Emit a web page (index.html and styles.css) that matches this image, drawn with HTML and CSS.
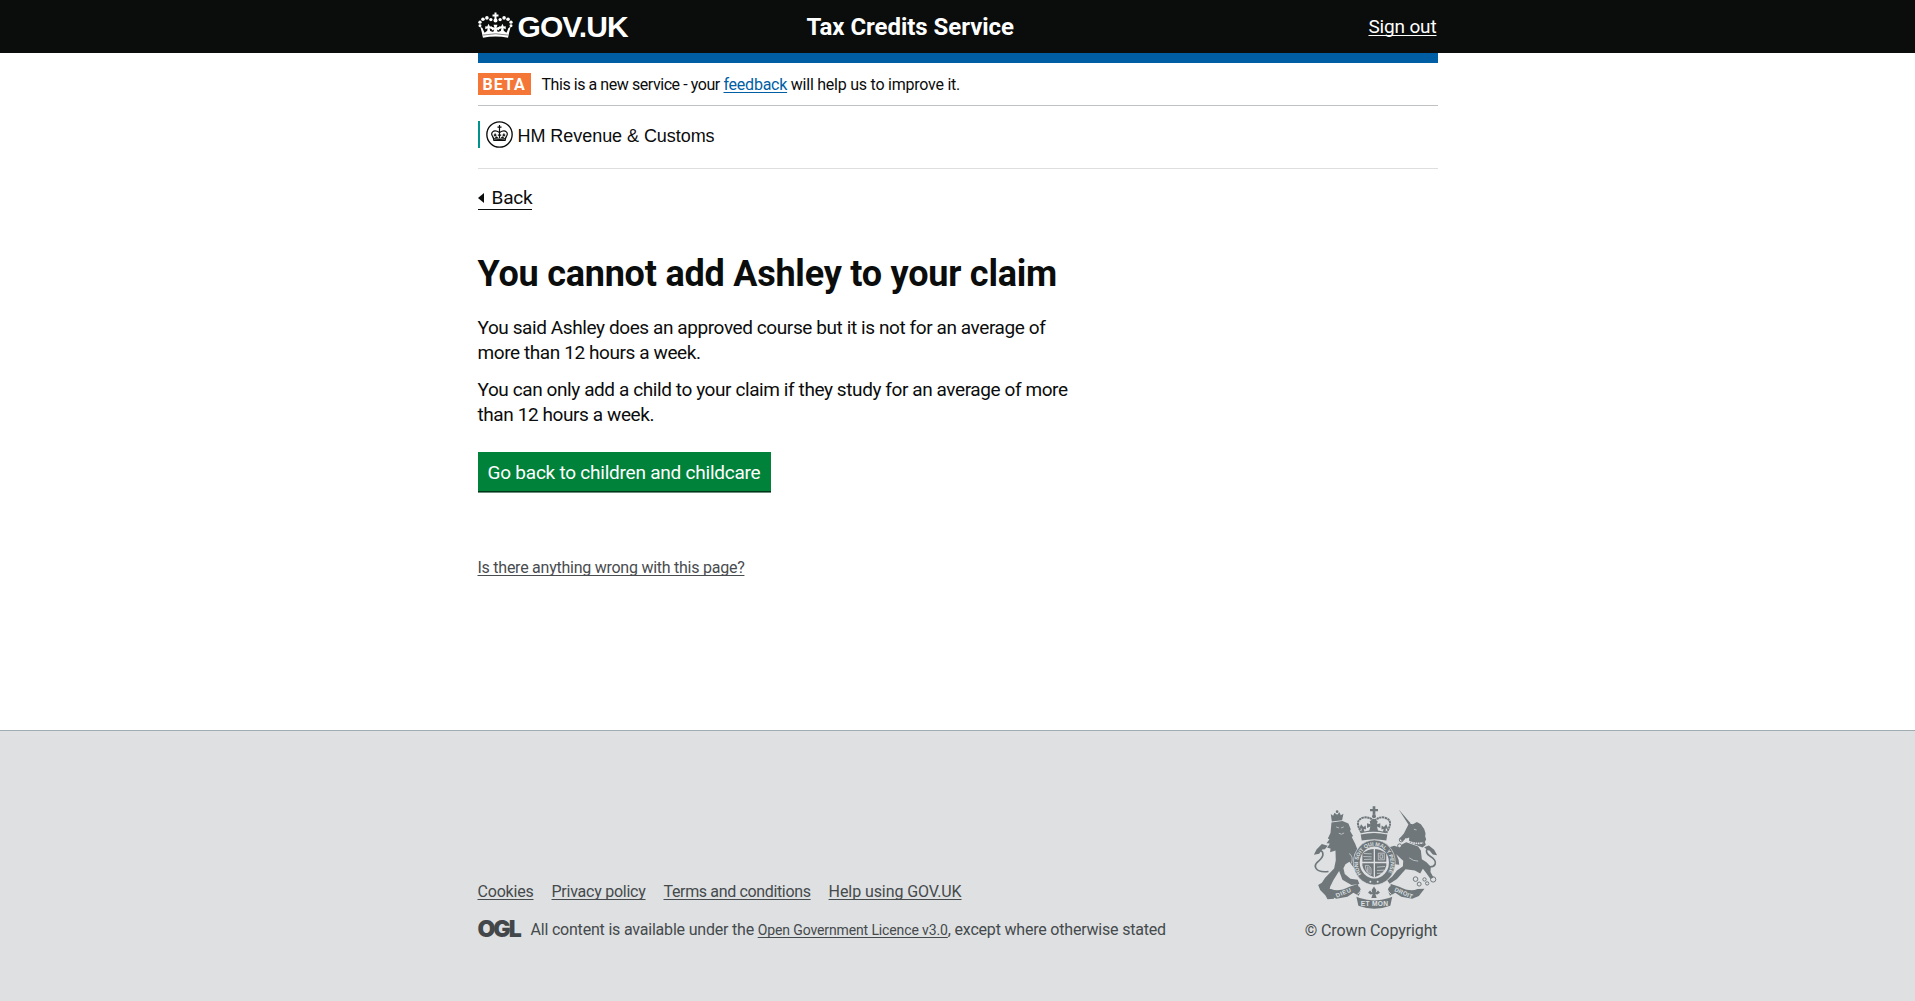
FILE: index.html
```html
<!DOCTYPE html>
<html lang="en">
<head>
<meta charset="utf-8">
<title>You cannot add Ashley to your claim</title>
<link rel="stylesheet" href="styles.css">
</head>
<body>
<header class="header">
  <div class="wrap header-row">
    <a class="logo" href="#">
      <svg class="logo-crown" viewBox="23 38 106 80" fill="#fff" aria-hidden="true">
        <path d="M73 39h6v6h6v6h-6v10h-6V51h-6v-6h6z"/>
        <circle cx="76" cy="63" r="6"/>
        <circle cx="62" cy="60" r="5"/><circle cx="50" cy="55" r="5.5"/><circle cx="38" cy="59" r="5.5"/><circle cx="29" cy="68" r="5"/><circle cx="29" cy="79" r="4.5"/>
        <circle cx="90" cy="60" r="5"/><circle cx="102" cy="55" r="5.5"/><circle cx="114" cy="59" r="5.5"/><circle cx="123" cy="68" r="5"/><circle cx="123" cy="79" r="4.5"/>
        <path d="M30 82q8 2 10 12l3 6 8-6 1-8-7 3v-9l6 1 4-8 4 8 6-1v9l-7-3 2 9 9 3 3-8-7 3v-11l8 3-3-9h12l-3 9 8-3v11l-7-3 3 8 9-3 2-9-7 3v-9l6 1 4-8 4 8 6-1v9l-7-3 1 8 8 6 3-6q2-10 10-12-5 17-8 33-38-7-76 0-3-16-8-33z"/>
        <path d="M38 107q38-8 76 0" fill="none" stroke="#0b0c0c" stroke-width="1.5"/>
      </svg>
      <span>GOV.UK</span>
    </a>
    <a class="service" href="#">Tax Credits Service</a>
    <a class="signout" href="#">Sign out</a>
  </div>
</header>
<main class="wrap">
  <div class="bar"></div>
  <div class="phase"><strong class="beta">BETA</strong><p><span class="intro">This is a new service - your</span> <a href="#">feedback</a> will help us to improve it.</p></div>
  <div class="org">
    <div class="org-mark">
      <svg class="org-crest" viewBox="0 0 80 80" aria-hidden="true">
        <g fill="none" stroke="#0b0c0c">
          <circle cx="40" cy="40" r="37.5" stroke-width="4"/>
          <path d="M22 49C10 35 22 23 40 34c18-11 30 1 18 15" stroke-width="3.5"/>
          <path d="M40 12v24M34 18h12M40 36v17M27 37v9M53 37v9M23 42h8M49 42h8M35 42h10" stroke-width="3.5"/>
        </g>
        <path d="M18 43l7 8 6-6 9 8 9-8 6 6 7-8-4 16H22z" fill="#0b0c0c"/>
        <path d="M24 54q16-4 32 0" stroke="#fff" stroke-width="1.5" fill="none"/>
      </svg>
      <span>HM Revenue &amp; Customs</span>
    </div>
  </div>
  <a class="back" href="#"><span class="arrow"></span>Back</a>
  <h1>You cannot add Ashley to your claim</h1>
  <p class="text first">You said Ashley does an approved course but it is not for an average of more than 12 hours a week.</p>
  <p class="text">You can only add a child to your claim if they study for an average of more than 12 hours a week.</p>
  <button class="button" type="button">Go back to children and childcare</button>
  <a class="report" href="#">Is there anything wrong with this page?</a>
</main>
<footer class="footer">
  <div class="wrap footer-row">
    <div class="meta">
      <nav class="links">
        <a class="cookies" href="#">Cookies</a>
        <a class="privacy" href="#">Privacy policy</a>
        <a class="terms" href="#">Terms and conditions</a>
        <a class="help" href="#">Help using GOV.UK</a>
      </nav>
      <div class="licence">
        <span class="ogl">OGL</span>
        <p>All content is available under the <a href="#">Open Government Licence v3.0</a>, except where otherwise stated</p>
      </div>
    </div>
    <div class="copyright">
      <svg class="arms" viewBox="15 10 375 310" aria-hidden="true">
        <defs><path id="motto" d="M160 215A49 53 0 1 1 238 215"/></defs>
        <g fill="#6f777b">
          <!-- centre crown -->
          <path d="M194 11h8v8h8v7h-8v10h-8V26h-8v-7h8z"/><circle cx="198" cy="41" r="6"/>
          <path d="M158 96q40-10 80 0l-3 18q-37-7-74 0z"/>
          <path d="M160 92l1-14-8 1 6-14 7 8 7-4 1 12-7-2 2 8 15-3 3-12-10 4v-14l10 3-2-9 12-8 12 8-2 9 10-3v14l-10-4 3 12 15 3 2-8-7 2 1-12 7 4 7-8 6 14-8-1 1 14q-38-9-76 0z"/>
          <!-- lion -->
          <path d="M68 34l7 5 4-9 8 6 7-7 4 9 8-5-4 20-31 4z"/><circle cx="87" cy="27" r="4"/>
          <path d="M70 60l33-5 18 8 7 17-2 5 9 15-4 3 10 20 8 20-10 12 7 26 9 8-5 12-14-7-12-16-12 7-6 12 4 18 17 14 22 3 5 13-24 3-27-16-10-26-17 27-10 20-4 21 14 8 2 7-20 2-6-12-16-16-6-15 11-7 10-15 27-28 5-25-1-29-16 5 1-11-10-2 8-13-10-1 9-12-5-2 8-17z"/>
          <!-- unicorn -->
          <path d="M272 20l36 42-5 6zM303 63l12 2 12-7 12 7 10 14 4 13-1 10 3 8-4 8 3 9-10 8-41-16 1-14-8 3-14 8-7-8 13-15z"/>
          <path d="M295 119l36 13 8 12 3 26 14 9 13 14-1 16 9 16-9 5-14-20-9-11-8 14-16-9-28-4-10 12-16 18-22 14-7-10 15-12 14-18 18-13 1-16-12-11-9-9 7 17 2 15-12-2-9-28-12-13 3-10 15-4 17 6 7-11z"/>
        </g>
        <g fill="none" stroke="#6f777b">
          <path d="M161 91q-25-38 5-46 18-4 32 11 14-15 32-11 30 8 5 46" stroke-width="6" stroke-dasharray="7 1.5"/>
          <path d="M61 207c-40 5-49-17-29-32 24-21 6-43-7-23" stroke-width="5"/>
          <path d="M349 190c39 11 43-15 18-29-24-14-4-38 11-10" stroke-width="5"/>
          <g stroke-width="3"><circle cx="280" cy="112" r="6"/><circle cx="275" cy="130" r="6"/><circle cx="276" cy="153" r="6"/><circle cx="323" cy="230" r="7"/><circle cx="334" cy="245" r="6"/><circle cx="350" cy="231" r="5"/><circle cx="358" cy="243" r="5"/><circle cx="376" cy="231" r="8"/></g>
        </g>
        <g fill="#6f777b">
          <path d="M17 157l8-16 16-17 18 6-9 10-8 1-9 13zM388 158l-9-16-16-13-14 5 10 9 6 1 10 12z"/>
          <path d="M48 259l21 1q22 10 55-7l25-8 10 17-7 18-16-9-18 12-33 6-20-8z"/>
          <path d="M350 259l-21 1q-22 10-55-7l-25-8-10 17 7 18 16-9 18 12 33 6 20-8z"/>
          <path d="M145 283l10 4q44 15 88 0l10-4-6 27q-48 18-96 0z"/>
          <path d="M198 252l7 11-2 8 7-7 6 7-8 5-6-1 4 12h-16l4-12-6 1-8-5 6-7 7 7-2-8z"/>
        </g>
        <path d="M150 250q13 1 10 10-3 9-12 16M248 250q-13 1-10 10 3 9 12 16" fill="none" stroke="#dee0e2" stroke-width="3"/>
        <path d="M292 108q18 19 54 13" fill="none" stroke="#dee0e2" stroke-width="5" stroke-dasharray="5 2"/>
        <path d="M84 73l9 3M99 76l8-3M92 92l8 3 8-4M123 153q14 8 7 30M304 166q12 10 27 10M318 80l8 2" fill="none" stroke="#dee0e2" stroke-width="2"/>
        <!-- garter and shield -->
        <ellipse cx="199" cy="180" rx="63" ry="68" fill="#6f777b" stroke="#dee0e2" stroke-width="2"/>
        <ellipse cx="199" cy="180" rx="44" ry="48" fill="#dee0e2"/>
        <path d="M163 153q36-27 72 0v36q-4 24-36 36-32-12-36-36z" fill="#6f777b"/>
        <g fill="none" stroke="#dee0e2" stroke-width="2">
          <path d="M199 134v92M160 180h79" stroke-width="4"/>
          <path d="M167 153l24 1M166 162l25 1M168 171l23-1M207 194l24-2M207 204l22-1M207 213l15-1M211 152h18v20h-18zM216 157h8v10h-8zM172 189q14-2 17 10v17M172 189q0 22 17 27M178 192v17M183 193v20"/>
        </g>
        <g fill="#dee0e2"><circle cx="187" cy="238" r="3"/><circle cx="209" cy="238" r="3"/></g>
        <g class="arms-text">
          <text font-size="16"><textPath href="#motto" textLength="222">HONI SOIT QUI MAL Y PENSE</textPath></text>
          <text x="158" y="310" font-size="20" textLength="82">ET MON</text>
          <text transform="translate(86 286) rotate(-23)" font-size="18" textLength="48">DIEU</text>
          <text transform="translate(258 266) rotate(23)" font-size="18" textLength="58">DROIT</text>
        </g>
      </svg>
      <a href="#">© Crown Copyright</a>
    </div>
  </div>
</footer>
</body>
</html>
```
FILE: styles.css
```css
* { box-sizing: border-box; }
body { margin: 0; background: linear-gradient(#fff 730px, #dee0e2 730px); color: #0b0c0c; font-family: Roboto, "Liberation Sans", sans-serif; min-height: 1001px; display: flex; flex-direction: column; }
p, h1 { margin: 0; }
a { color: inherit; text-underline-offset: 2px; text-decoration-thickness: 1px; text-decoration-skip-ink: none; }
.wrap { width: 960px; margin-left: calc(50% - 480px); }

.header { background: #0b0c0c; color: #fff; height: 53px; }
.header-row { display: grid; grid-template-columns: 329px 1fr auto; }
.logo { display: flex; gap: 5px; color: #fff; text-decoration: none; font: bold 30px/34px "Liberation Sans", Arial, sans-serif; letter-spacing: -0.9px; padding-top: 10px; }
.logo-crown { width: 35px; height: 27px; margin-top: 2px; }
.service { font-size: 24px; line-height: 30px; font-weight: 700; letter-spacing: -0.05px; text-decoration: none; padding-top: 12px; }
.signout { font-size: 19px; line-height: 25px; letter-spacing: -0.16px; padding: 14px 1px 0 0; }

main.wrap { height: 677px; display: flex; flex-direction: column; align-items: flex-start; }
.bar { width: 100%; height: 10px; background: #005ea5; flex: none; }
.phase { width: 100%; height: 43px; flex: none; border-bottom: 1px solid #bfc1c3; display: flex; gap: 11px; padding-top: 10px; }
.beta { background: #f47738; color: #fff; width: 53px; height: 22px; font-size: 16px; line-height: 23px; letter-spacing: 1px; padding-left: 5px; }
.phase p { font-size: 16px; line-height: 24px; letter-spacing: -0.24px; }
.phase .intro { letter-spacing: -0.44px; }
.phase a { color: #005ea5; }
.org { width: 100%; height: 63px; flex: none; border-bottom: 1px solid #dedede; padding-top: 15px; }
.org-mark { height: 27px; border-left: 2px solid #00928f; padding-left: 6px; display: flex; align-items: center; gap: 5px; font: 18px/27px "Liberation Sans", Arial, sans-serif; letter-spacing: -0.05px; }
.org-mark span { padding-top: 3px; }
.org-crest { width: 27px; height: 27px; }
.back { margin-top: 16px; height: 25px; display: flex; align-items: center; border-bottom: 1px solid #0b0c0c; text-decoration: none; font-size: 19px; line-height: 24px; letter-spacing: -0.2px; padding-top: 1px; }
.arrow { border: 5px solid transparent; border-left: 0; border-right: 6px solid #0b0c0c; margin-right: 8px; }
h1 { margin-top: 42px; font-size: 36px; line-height: 45px; font-weight: 700; letter-spacing: -0.23px; }
.text { width: 605px; font-size: 19px; line-height: 25px; letter-spacing: -0.41px; }
.first { margin: 18px 0 12px; }
.button { margin: 25px 0 0; width: 293px; height: 39px; flex: none; padding: 1px 0 0; border: 0; background: #00823b; box-shadow: 0 1px 0 #003618, 0 2px 0 #6e8c7b; color: #fff; font: 19px/25px Roboto, "Liberation Sans", sans-serif; letter-spacing: -0.23px; }
.report { margin-top: 67px; font-size: 16px; line-height: 20px; letter-spacing: -0.25px; color: #494c4f; }

.footer { background: #dee0e2; border-top: 1px solid #a1acb2; height: 271px; color: #454a4c; font-size: 16px; line-height: 20px; }
.footer-row { height: 210px; display: flex; justify-content: space-between; align-items: flex-end; }
.meta { display: flex; flex-direction: column; gap: 18px; }
.links { display: flex; gap: 18px; }
.cookies { letter-spacing: -0.2px; }
.privacy { letter-spacing: -0.25px; }
.terms { letter-spacing: -0.35px; }
.help { letter-spacing: -0.08px; }
.licence { display: flex; gap: 10px; height: 21px; letter-spacing: -0.2px; }
.licence a { font-size: 14px; letter-spacing: -0.12px; }
.ogl { width: 43px; font: 900 23px/18px Inter, sans-serif; letter-spacing: -2px; color: #434749; }
.copyright { display: flex; flex-direction: column; align-items: flex-end; }
.arms { width: 125px; height: 103px; margin-bottom: 12px; }
.arms-text { font-family: "Liberation Sans", sans-serif; font-weight: 700; fill: #dee0e2; }
.copyright a { text-decoration: none; letter-spacing: -0.1px; }
```
